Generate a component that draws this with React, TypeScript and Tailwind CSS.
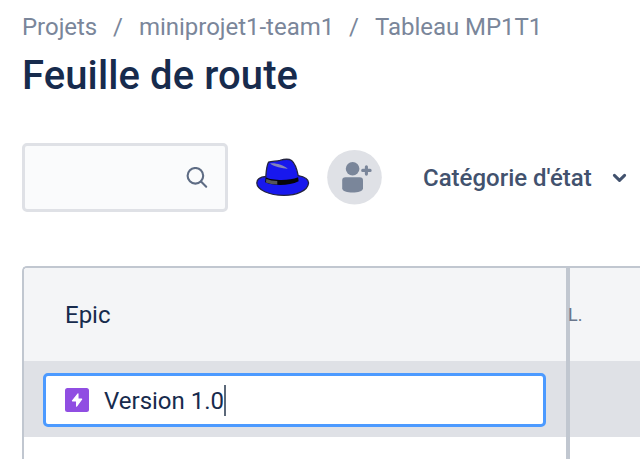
import React from "react";

function Hat() {
  return (
    <svg className="h-10 w-[56px] shrink-0" viewBox="0 0 56 40">
      <path d="M10.8 18.5C11.2 13 11.6 7.5 13.6 4.2C16.5 2.8 21 3.4 25 2.4C29 1.2 34 .9 36.6 2.5C39.3 4.7 42 11.5 43.2 17.6C49.5 18.8 53.8 21.8 53.5 25.3C52.5 32.8 41.5 37.4 29 37.4C14 37.4 2 31.8 1.8 25C1.9 21.3 5.5 18.9 10.8 18.5Z" fill="#1818ee" stroke="#242440" strokeWidth="1.3" />
      <path d="M10.6 19.3C17 22.6 34 23.3 43.1 19.3L43.6 23.3C34 28.2 18 27.9 10.2 24.3Z" fill="#050508" />
      <path d="M11.3 21C14.5 22.3 18.5 22.8 22.3 22.9V26.6C18 26.5 14 25.9 10.9 24.6Z" fill="#565658" />
      <path d="M15 5.6C20 4.6 28 6.9 32.8 10.9C27 10.4 19.5 9 15 5.6Z" fill="#8585b8" />
    </svg>
  );
}

function AddPerson() {
  return (
    <svg className="h-[55px] w-[55px] shrink-0" viewBox="0 0 55 55">
      <circle cx="27.5" cy="27.3" r="27.3" fill="#dfe1e6" />
      <g fill="#7a869a">
        <circle cx="25.6" cy="18.7" r="6.8" />
        <path d="M18.5 27.2H32.7Q36 27.2 36 30.5V38.2C36 44 15.2 44 15.2 38.2V30.5Q15.2 27.2 18.5 27.2Z" />
      </g>
      <path d="M39.4 16.7V24.1M35.7 20.4H43.1" stroke="#7a869a" strokeWidth="3.1" strokeLinecap="round" />
    </svg>
  );
}

function EpicIcon() {
  return (
    <svg className="h-6 w-6 shrink-0" viewBox="0 0 24 24">
      <rect width="24" height="24" rx="2.5" fill="#904ee2" />
      <path d="M13 5.8L7.4 12.9H11.6V18.2L16.7 11.1H13Z" fill="#fff" stroke="#fff" strokeWidth="1.1" strokeLinejoin="round" />
    </svg>
  );
}

export default function App() {
  return (
    <div className="flex h-[459px] w-[640px] flex-col overflow-hidden bg-white pl-[22px] font-['Roboto',sans-serif] text-[#172b4d]">
      <nav className="mt-[11px] flex h-8 shrink-0 items-center text-2xl tracking-[-0.03px] whitespace-nowrap text-[#7a869a]">
        <span className="w-[91px]">Projets</span>
        <span className="w-[26px]">/</span>
        <span className="w-[210px]">miniprojet1-team1</span>
        <span className="w-[26px]">/</span>
        <span>Tableau MP1T1</span>
      </nav>
      <h1 className="mt-[9px] h-12 shrink-0 text-[40px] leading-[48px] font-medium tracking-[0.1px] whitespace-nowrap">Feuille de route</h1>

      <div className="mt-[43px] flex h-[69px] shrink-0 items-center">
        <div className="flex h-[69px] w-[206px] shrink-0 items-center justify-end rounded-[5px] border-[3px] border-[#dfe1e6] bg-[#fafbfc] pr-[17px]">
          <svg className="h-[22px] w-[22px]" viewBox="0 0 22 22" fill="none" stroke="#5e6c84" strokeWidth="2.1" strokeLinecap="round">
            <circle cx="9.4" cy="8.8" r="7.8" />
            <path d="M15 14.5L20.2 19.7" />
          </svg>
        </div>
        <div className="ml-[27px]"><Hat /></div>
        <div className="ml-4"><AddPerson /></div>
        <button className="ml-[41px] flex items-center text-2xl font-medium whitespace-nowrap text-[#42526e]">
          <span className="w-[189px] text-left">Catégorie d'état</span>
          <svg className="h-[10px] w-[15px]" viewBox="0 0 15 10" fill="none" stroke="#42526e" strokeWidth="3" strokeLinecap="round" strokeLinejoin="round">
            <path d="M2.4 2.4L7.5 7.4L12.6 2.4" />
          </svg>
        </button>
      </div>

      <div className="mt-[54px] flex grow overflow-hidden rounded-tl-[5px] border-t-2 border-l-2 border-[#c1c7d0]">
        <div className="flex w-[542px] shrink-0 flex-col">
          <div className="flex h-[93px] items-center bg-[#f4f5f7] pl-[41px] text-2xl">Epic</div>
          <div className="flex h-[76px] items-center bg-[#dfe1e6] pt-0.5 pl-[19px]">
            <div className="flex h-[54px] w-[503px] items-center rounded-[5px] border-[3px] border-[#4c9aff] bg-white pl-[19px]">
              <EpicIcon />
              <span className="ml-[15px] pt-px text-2xl whitespace-nowrap">Version 1.0</span>
              <span className="h-[31px] w-0.5 bg-[#5b6879]" />
            </div>
          </div>
        </div>
        <div className="w-1 shrink-0 bg-[#c1c7d0]" />
        <div className="flex grow flex-col">
          <div className="flex h-[93px] items-center bg-[#f4f5f7] text-lg text-[#6b778c]">
            <span className="-ml-0.5">L.</span>
          </div>
          <div className="h-[76px] bg-[#dfe1e6]" />
        </div>
      </div>
    </div>
  );
}
